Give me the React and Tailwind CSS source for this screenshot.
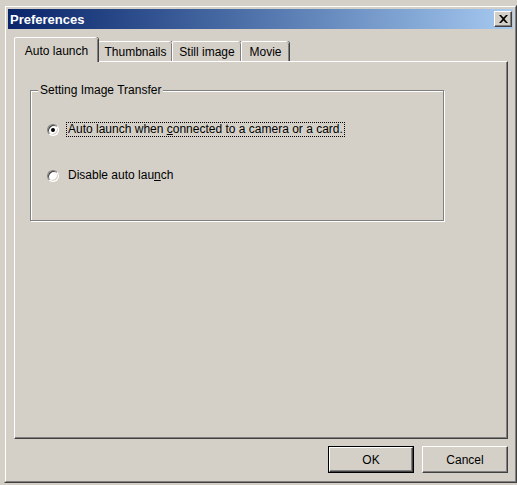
import React from 'react';

function Radio({ checked }) {
  return (
    <span className="relative flex items-center justify-center w-[12px] h-[12px] rounded-full bg-white border border-t-[#808080] border-l-[#808080] border-r-white border-b-white shadow-[inset_1px_1px_0_#404040,inset_-1px_-1px_0_#d4d0c8]">
      {checked && <span className="w-[4px] h-[4px] rounded-full bg-black"></span>}
    </span>
  );
}

function Tab({ label, selected, width }) {
  if (selected) {
    return (
      <div
        className="relative z-10 -mb-px h-[25px] flex items-start justify-center pt-[4px] bg-[#d4d0c8] border-l border-t border-white rounded-tl-[2px] rounded-tr-[3px] shadow-[1px_0_0_#404040,inset_-1px_0_0_#808080]"
        style={{ width }}
      >
        {label}
      </div>
    );
  }
  return (
    <div
      className="h-[20px] flex items-center justify-center bg-[#d4d0c8] border-l border-t border-white rounded-tl-[2px] rounded-tr-[3px] shadow-[1px_0_0_#404040,inset_-1px_0_0_#808080]"
      style={{ width }}
    >
      {label}
    </div>
  );
}

export default function App() {
  return (
    <div
      className="w-[517px] h-[485px] bg-[#d4d0c8] pt-[5px] pl-[4px] text-[12px] text-black overflow-hidden"
      style={{ fontFamily: '"Liberation Sans", Arial, sans-serif' }}
    >
      {/* Window */}
      <div className="w-[513px] h-[478px] flex flex-col border border-t-[#d4d0c8] border-l-[#d4d0c8] border-r-[#404040] border-b-[#404040]">
        <div className="flex-1 flex flex-col p-[2px] border border-t-white border-l-white border-r-[#808080] border-b-[#808080]">
          {/* Title bar */}
          <div className="h-[20px] flex items-center justify-between pl-[2px] pr-[1px] bg-gradient-to-r from-[#0a246a] to-[#a6caf0]">
            <span className="text-white font-bold text-[13px] leading-none">Preferences</span>
            <button className="w-[18px] h-[16px] flex items-center justify-center bg-[#d4d0c8] border border-t-white border-l-white border-r-[#404040] border-b-[#404040] shadow-[inset_-1px_-1px_0_#808080]">
              <svg width="9" height="8" viewBox="0 0 9 8">
                <path d="M0 0h2l2.5 2.5L7 0h2L5.5 4 9 8H7L4.5 5.5 2 8H0l3.5-4z" fill="#000" />
              </svg>
            </button>
          </div>

          {/* Body */}
          <div className="flex-1 flex flex-col pl-[6px] pr-[5px] pt-[8px]">
            {/* Tabs */}
            <div className="flex items-end h-[24px]">
              <Tab label="Auto launch" selected width={84} />
              <Tab label="Thumbnails" width={74} />
              <Tab label="Still image" width={69} />
              <Tab label="Movie" width={48} />
            </div>

            {/* Tab panel */}
            <div className="h-[378px] border border-t-white border-l-white border-r-[#404040] border-b-[#404040] shadow-[inset_-1px_-1px_0_#808080] pt-[21px] pl-[15px]">
              <fieldset className="w-[414px] h-[138px] border border-[#808080] shadow-[inset_1px_1px_0_#fff,1px_1px_0_#fff]">
                <legend className="ml-[7px] px-[2px] leading-[14px] bg-[#d4d0c8]">Setting Image Transfer</legend>
                <div className="flex flex-col gap-[29px] mt-[24px] pl-[16px]">
                  <label className="flex items-center h-[17px]">
                    <Radio checked />
                    <span className="ml-[7px] px-px border border-dotted border-black leading-[13px]">
                      Auto launch when <u className="underline-offset-1">c</u>onnected to a camera or a card.
                    </span>
                  </label>
                  <label className="flex items-center h-[17px]">
                    <Radio />
                    <span className="ml-[7px] px-px border border-transparent leading-[13px]">
                      Disable auto lau<u className="underline-offset-1">n</u>ch
                    </span>
                  </label>
                </div>
              </fieldset>
            </div>

            {/* Buttons */}
            <div className="flex justify-end gap-[8px] mt-[7px]">
              <button className="w-[86px] h-[27px] border border-black">
                <span className="flex items-center justify-center w-full h-full border border-t-white border-l-white border-r-[#404040] border-b-[#404040] shadow-[inset_-1px_-1px_0_#808080]">
                  OK
                </span>
              </button>
              <button className="w-[86px] h-[27px] flex items-center justify-center border border-t-white border-l-white border-r-[#404040] border-b-[#404040] shadow-[inset_-1px_-1px_0_#808080]">
                Cancel
              </button>
            </div>
          </div>
        </div>
      </div>
    </div>
  );
}
